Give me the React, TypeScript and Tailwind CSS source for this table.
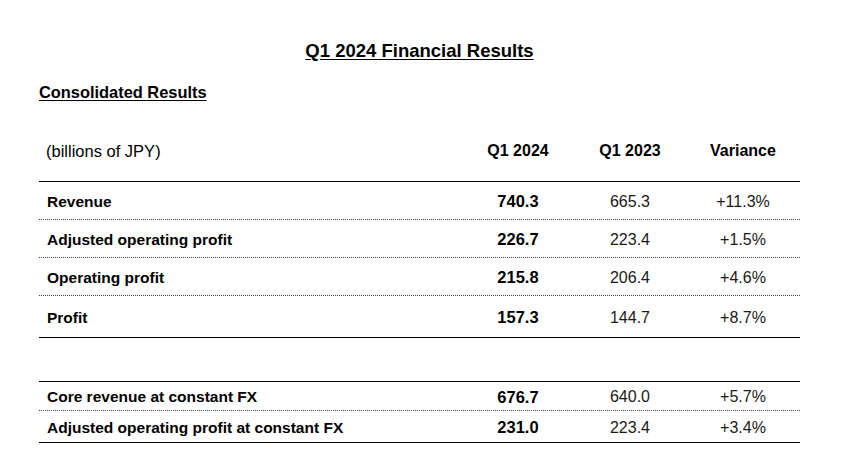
type Row = {
  label: string;
  current: string;
  previous: string;
  variance: string;
  height: string;
  border: string;
};

const mainRows: Row[] = [
  { label: 'Revenue', current: '740.3', previous: '665.3', variance: '+11.3%', height: 'h-[38px]', border: 'border-b border-dotted border-[#444]' },
  { label: 'Adjusted operating profit', current: '226.7', previous: '223.4', variance: '+1.5%', height: 'h-[38px]', border: 'border-b border-dotted border-[#444]' },
  { label: 'Operating profit', current: '215.8', previous: '206.4', variance: '+4.6%', height: 'h-[38px]', border: 'border-b border-dotted border-[#444]' },
  { label: 'Profit', current: '157.3', previous: '144.7', variance: '+8.7%', height: 'h-[42px]', border: 'border-b border-solid border-black' },
];

const fxRows: Row[] = [
  { label: 'Core revenue at constant FX', current: '676.7', previous: '640.0', variance: '+5.7%', height: 'h-[29px]', border: 'border-b border-dotted border-[#444]' },
  { label: 'Adjusted operating profit at constant FX', current: '231.0', previous: '223.4', variance: '+3.4%', height: 'h-[32px]', border: 'border-b border-solid border-black' },
];

function TableRow({ row }: { row: Row }) {
  return (
    <div className={`flex items-center pt-[2px] ${row.height} ${row.border}`}>
      <div className="flex-1 pl-[8px] text-[15.5px] font-bold">{row.label}</div>
      <div className="w-[112px] text-center text-[16.5px] font-bold">{row.current}</div>
      <div className="w-[112px] text-center text-[16px] text-[#1a1a1a]">{row.previous}</div>
      <div className="w-[114px] text-center text-[16px] text-[#1a1a1a]">{row.variance}</div>
    </div>
  );
}

export default function App() {
  return (
    <div className="w-[854px] h-[455px] bg-white text-black font-['Liberation_Sans',Arial,sans-serif] overflow-hidden">
      <div className="ml-[39px] w-[761px]">
        <h1 className="pt-[39px] h-[63px] leading-[24px] text-center text-[18.5px] font-bold underline underline-offset-[2px]">
          Q1 2024 Financial Results
        </h1>

        <h2 className="mt-[19px] h-[20px] leading-[20px] text-[16.4px] font-bold underline underline-offset-[2px]">
          Consolidated Results
        </h2>

        <div className="mt-[37px] mb-[18px] h-[24px] leading-[24px] flex">
          <div className="flex-1 pl-[7px] text-[16.5px]">(billions of JPY)</div>
          <div className="w-[112px] text-center text-[16px] font-bold">Q1 2024</div>
          <div className="w-[112px] text-center text-[16px] font-bold">Q1 2023</div>
          <div className="w-[114px] text-center text-[16px] font-bold">Variance</div>
        </div>

        <div className="border-t border-black">
          {mainRows.map((row) => (
            <TableRow key={row.label} row={row} />
          ))}
        </div>

        <div className="mt-[43px] border-t border-black">
          {fxRows.map((row) => (
            <TableRow key={row.label} row={row} />
          ))}
        </div>
      </div>
    </div>
  );
}
